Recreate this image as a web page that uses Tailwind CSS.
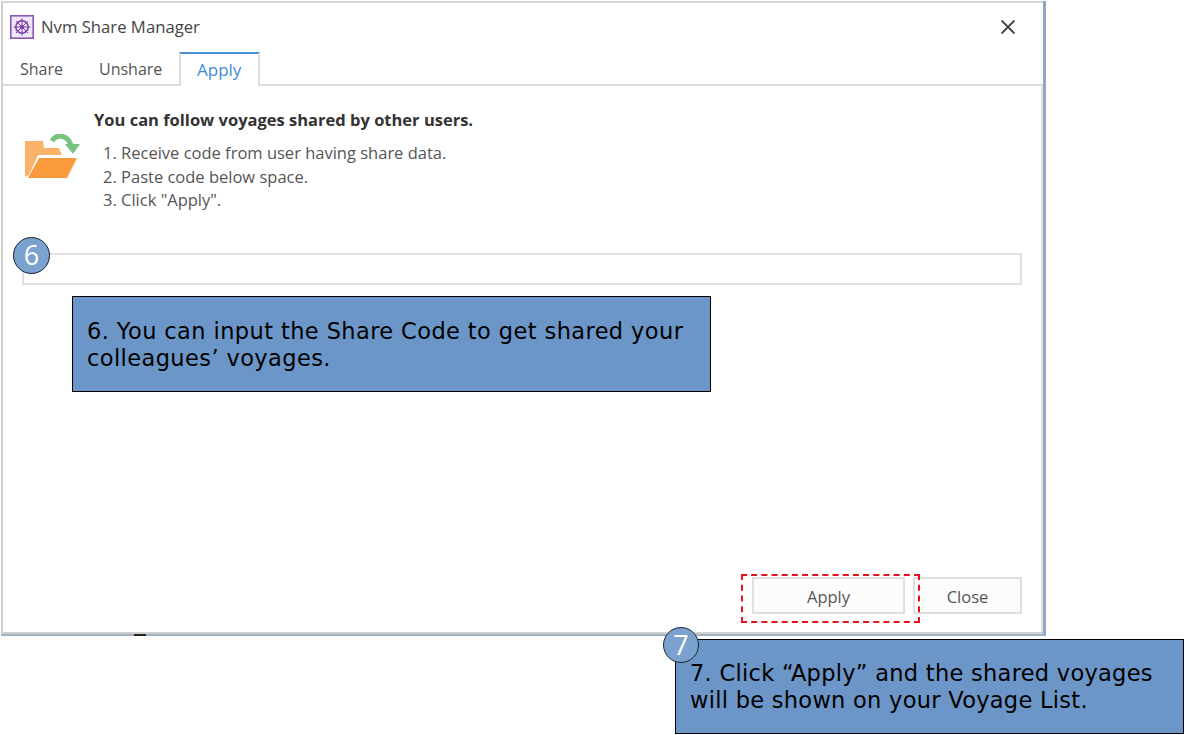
<!DOCTYPE html>
<html lang="en">
<head>
  <meta charset="UTF-8" />
  <title>Nvm Share Manager</title>
  <script src="https://cdn.jsdelivr.net/npm/@tailwindcss/browser@4"></script>
</head>
<body class="bg-white">
<div class="relative w-[1185px] h-[735px] overflow-hidden font-['Open_Sans',sans-serif]">

  <!-- Dialog window -->
  <div class="mt-px ml-px w-[1045px] h-[635px] border-r-[3px] border-b-2 border-r-[#8fa9c4] border-b-[#9fb2c4]">
    <div class="flex flex-col h-full bg-white border-t-2 border-l-2 border-b-2 border-t-[#d4d4d4] border-l-[#cfcfcf] border-b-[#d0d0d0]">
      <!-- Title bar -->
      <div class="flex items-center h-[49px] pb-[2px] pl-[7px] pr-[27px] shrink-0">
        <svg class="w-6 h-6 shrink-0" viewBox="0 0 24 24">
          <rect x="0.8" y="0.8" width="22.4" height="22.4" fill="#efe6f7" stroke="#8a55b8" stroke-width="1.6"/>
          <circle cx="12" cy="12" r="6.2" fill="none" stroke="#7b3fa8" stroke-width="1.5"/>
          <circle cx="12" cy="12" r="2" fill="#7b3fa8"/>
          <path d="M12 3.5V20.5M3.5 12H20.5M6 6L18 18M18 6L6 18" stroke="#7b3fa8" stroke-width="1"/>
        </svg>
        <span class="ml-[7px] text-[16.7px] text-[#444]">Nvm Share Manager</span>
        <svg class="ml-auto w-4 h-4" viewBox="0 0 16 16">
          <path d="M1.5 1.5L14.5 14.5M14.5 1.5L1.5 14.5" stroke="#444" stroke-width="1.8" fill="none"/>
        </svg>
      </div>

      <!-- Tabs -->
      <div class="flex h-[34px] shrink-0 text-[16px] text-[#555]">
        <div class="w-[77px] pl-[17px] pt-[5px] border-b-2 border-[#dcdcdc]">Share</div>
        <div class="w-[99px] pl-[19px] pt-[5px] border-b-2 border-[#dcdcdc]">Unshare</div>
        <div class="w-[81px] pl-4 pt-[3px] border-t-2 border-x-2 border-t-[#4a90d9] border-x-[#dcdcdc] text-[17px] text-[#3f8bd8]">Apply</div>
        <div class="grow border-b-2 border-[#dcdcdc]"></div>
      </div>

      <!-- Tab body -->
      <div class="flex flex-col grow pl-[19px] pr-[19px] pb-[18px] border-r-2 border-[#e2e2e2]">
        <div class="flex h-[167px]">
          <svg class="w-[56px] h-[46px] mt-[48px] ml-[2px] shrink-0" viewBox="0 0 56 46">
            <path d="M1 7H19L20 14H35L38 21H14L5 41L1 43Z" fill="#fab26b"/>
            <path d="M15 24H53L43 44H4Z" fill="#f99a3c"/>
            <path d="M28 7C32 0 43 0 47 11" stroke="#75c47f" stroke-width="5" fill="none"/>
            <path d="M41 10H56L49 20Z" fill="#75c47f"/>
          </svg>
          <div class="ml-[14px] pt-[23px] text-[16.5px] text-[#555]">
            <p class="font-bold text-[#333] leading-[22px]">You can follow voyages shared by other users.</p>
            <ol class="mt-[10px] ml-[9px] leading-[23.5px]">
              <li>1. Receive code from user having share data.</li>
              <li>2. Paste code below space.</li>
              <li>3. Click "Apply".</li>
            </ol>
          </div>
        </div>
        <div class="h-[32px] border-2 border-[#e0e0e0]"></div>

        <!-- Buttons -->
        <div class="flex justify-end gap-2 mt-auto text-[16.5px] text-[#555]">
          <div class="flex items-center justify-center w-[153px] h-[37px] pt-[3px] border-2 border-[#e0e0e0] bg-[#fcfcfc]">Apply</div>
          <div class="flex items-center justify-center w-[109px] h-[37px] pt-[3px] border-2 border-[#e0e0e0] bg-[#fcfcfc]">Close</div>
        </div>
      </div>
    </div>
  </div>
  <!-- speck of the window behind, shows under the dialog edge -->
  <div class="absolute left-[134px] top-[634px] w-3 h-[2px] bg-[#222]"></div>

  <!-- Callout annotations over the screenshot -->
  <div class="absolute left-[72px] top-[296px] w-[639px] h-[96px] bg-[#6c96c8] border border-black px-[14px] pt-[21px] font-['DejaVu_Sans',sans-serif] text-[22.5px] tracking-[0.4px] leading-[27px] text-black">
    6. You can input the Share Code to get shared your colleagues’ voyages.
  </div>
  <div class="absolute left-[675px] top-[639px] w-[509px] h-[95px] bg-[#6c96c8] border border-black px-[14px] pt-[20px] font-['DejaVu_Sans',sans-serif] text-[22.5px] tracking-[0.28px] leading-[27px] text-black">
    7. Click “Apply” and the shared voyages will be shown on your Voyage List.
  </div>
  <div class="absolute left-[13px] top-[237px] flex items-center justify-center w-[37px] h-[37px] rounded-full bg-[#7ba1cf] border border-[#1a2430] text-[27px] text-white">6</div>
  <div class="absolute left-[663px] top-[627px] flex items-center justify-center w-[36px] h-[36px] rounded-full bg-[#7ba1cf] border border-[#1a2430] text-[27px] text-white">7</div>
  <div class="absolute left-[741px] top-[574px] w-[179px] h-[49px] border-2 border-dashed border-[#e8121c]"></div>
</div>
</body>
</html>
